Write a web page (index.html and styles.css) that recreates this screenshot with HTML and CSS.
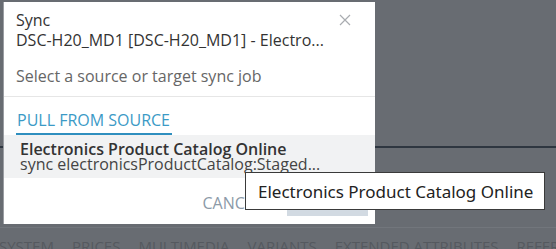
FILE: index.html
```html
<!DOCTYPE html>
<html lang="en">
<head>
    <meta charset="UTF-8">
    <title>Sync</title>
    <link rel="stylesheet" href="styles.css">
</head>
<body>
    <div class="page">
        <div class="page-rule"></div>
        <div class="page-tabs">
            <span>SYSTEM</span>
            <span>PRICES</span>
            <span>MULTIMEDIA</span>
            <span>VARIANTS</span>
            <span>EXTENDED ATTRIBUTES</span>
            <span>REFERENCES</span>
        </div>
    </div>

    <div class="dialog">
        <div class="dialog-header">
            <div class="dialog-title">Sync</div>
            <div class="dialog-title">DSC-H20_MD1 [DSC-H20_MD1] - Electro...</div>
            <div class="dialog-hint">Select a source or target sync job</div>
            <svg class="close" width="12" height="12" viewBox="0 0 12 12">
                <path d="M1 1L11 11M11 1L1 11" stroke="#a9acb0" stroke-width="1.2" fill="none"/>
            </svg>
        </div>
        <div class="tabs">
            <div class="tab active">PULL FROM SOURCE</div>
        </div>
        <div class="job">
            <div class="job-name">Electronics Product Catalog Online</div>
            <div class="job-code">sync electronicsProductCatalog:Staged...</div>
        </div>
        <div class="dialog-footer">
            <span class="btn-cancel">CANCEL</span>
            <span class="btn-sync">SYNC</span>
        </div>
    </div>

    <div class="tooltip">Electronics Product Catalog Online</div>
</body>
</html>
```

FILE: styles.css
```css
body {
    margin: 0;
    width: 556px;
    height: 249px;
    overflow: hidden;
    background: #686c72;
    font-family: "Open Sans", sans-serif;
}
.page {
    padding-top: 146px;
}
.page-rule {
    height: 2px;
    background: #2e3640;
}
.page-tabs {
    margin-top: 79px;
    border-top: 1px solid #72767c;
    padding: 7px 0 0 0;
    margin-left: -1px;
    display: flex;
    gap: 18px;
    white-space: nowrap;
    font-size: 15px;
    line-height: 22px;
    color: #55595f;
}
.dialog {
    position: absolute;
    left: 3px;
    top: 2px;
    width: 372px;
    height: 222px;
    background: #fff;
    border-left: 1px solid #9a9da2;
    box-sizing: border-box;
    display: flex;
    flex-direction: column;
}
.dialog-header {
    position: relative;
    padding: 8px 13px 0 12px;
    height: 86px;
    border-bottom: 1px solid #e6e6e6;
}
.dialog-title {
    font-size: 16px;
    line-height: 20px;
    color: #333;
}
.dialog-hint {
    margin-top: 16px;
    font-size: 16px;
    line-height: 20px;
    color: #666;
}
.close {
    position: absolute;
    right: 24px;
    top: 12px;
}
.tabs {
    padding: 0 0 0 12px;
}
.tab {
    display: inline-block;
    padding: 13px 2px 3px 1px;
    font-size: 16px;
    line-height: 20px;
    color: #3b9ac6;
    border-bottom: 2px solid #2f8fbf;
}
.job {
    background: #f1f2f3;
    padding: 7px 12px 0 16px;
    height: 43px;
    box-sizing: border-box;
    white-space: nowrap;
}
.job-name {
    font-size: 16px;
    line-height: 15px;
    font-weight: 600;
    color: #333;
}
.job-code {
    font-size: 16px;
    line-height: 14px;
    color: #444;
}
.dialog-footer {
    margin-top: auto;
    display: flex;
    justify-content: flex-end;
    align-items: flex-end;
    gap: 25px;
    padding: 0 7px 8px 0;
}
.btn-cancel {
    font-size: 16px;
    line-height: 20px;
    color: #8c9aa8;
    margin-bottom: 3px;
}
.btn-sync {
    width: 81px;
    height: 28px;
    background: #d2dae2;
    color: #d2dae2;
    font-size: 15px;
    text-align: center;
}
.tooltip {
    position: absolute;
    left: 245px;
    top: 172px;
    width: 300px;
    height: 38px;
    box-sizing: border-box;
    padding: 7px 0 0 12px;
    background: #fff;
    border: 1px solid #3a3a3a;
    font-family: "Noto Sans", sans-serif;
    font-size: 17px;
    line-height: 23px;
    color: #222;
    white-space: nowrap;
}
```
